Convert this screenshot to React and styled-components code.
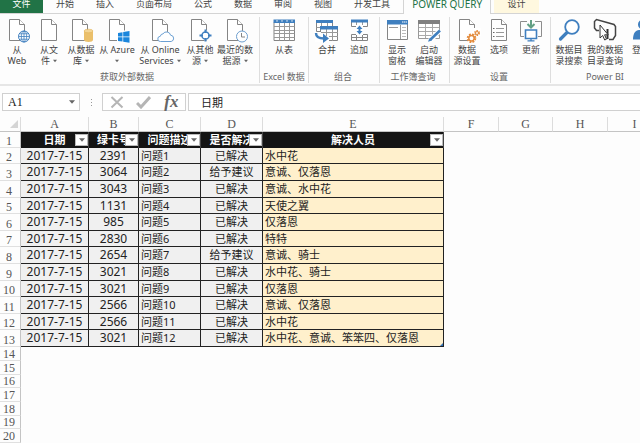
import styled, { createGlobalStyle } from 'styled-components'

const TABS = ['开始', '插入', '页面布局', '公式', '数据', '审阅', '视图', '开发工具']

const PEOPLE = [
	['2391', '已解决', '水中花'],
	['3064', '给予建议', '意诚、仅落恩'],
	['3043', '已解决', '意诚、水中花'],
	['1131', '已解决', '天使之翼'],
	['985', '已解决', '仅落恩'],
	['2830', '已解决', '特特'],
	['2654', '给予建议', '意诚、骑士'],
	['3021', '已解决', '水中花、骑士'],
	['3021', '已解决', '仅落恩'],
	['2566', '已解决', '意诚、仅落恩'],
	['2566', '已解决', '水中花'],
	['3021', '已解决', '水中花、意诚、笨笨四、仅落恩'],
]

const HEADERS = ['日期', '绿卡号', '问题描述', '是否解决', '解决人员']
const LETTERS = ['A', 'B', 'C', 'D', 'E', 'F', 'G', 'H', 'I']
const COL_WIDTHS = [21, 68, 50, 62, 62, 181, 55, 54, 55, 54]
const EMPTY_ROWS = [14, 15, 16, 17, 18, 19, 20]

const BLUE = '#3f7fbf'

/* ---------- icons ---------- */

const Icon = ({ children }) => (
	<svg width='24' height='24' viewBox='0 0 24 24' fill='none' overflow='visible' aria-hidden='true'>
		{children}
	</svg>
)

const Doc = ({ x = 4 }) => (
	<g transform={`translate(${x} 0)`} stroke='#858585' fill='#fff'>
		<path d='M.5 1.5h10l5 5v16H.5z' />
		<path d='M10.5 1.5v5h5' />
	</g>
)

const WebIcon = () => (
	<Icon>
		<Doc />
		<circle cx='19' cy='18.5' r='5.5' fill='#fff' stroke={BLUE} />
		<path d='M13.5 18.5h11M19 13v11M14.5 15.8h9M14.5 21.2h9' stroke={BLUE} strokeWidth='.8' />
		<ellipse cx='19' cy='18.5' rx='2.7' ry='5.5' stroke={BLUE} strokeWidth='.8' />
	</Icon>
)

const FileIcon = () => (
	<Icon>
		<Doc />
	</Icon>
)

const DatabaseIcon = () => (
	<Icon>
		<Doc x={3} />
		<path d='M15 13v9c0 1.200 2 2 4.500 2s4.500-.8 4.500-2v-9z' fill='#ebc06b' />
		<ellipse cx='19.500' cy='13' rx='4.500' ry='1.800' fill='#f3d595' stroke='#e3b459' strokeWidth='.6' />
	</Icon>
)

const AzureIcon = () => (
	<Icon>
		<Doc />
		<path d='M12 12.500h13v12H12z' fill='#fff' />
		<path d='M13 15l4.500-.8v4.300H13zM18.200 14l6.300-1v5.500h-6.300zM13 19.300h4.500v4.300l-4.500-.7zM18.200 19.300h6.300v5.400l-6.300-.9z' fill='#1b86dc' />
	</Icon>
)

const CloudIcon = () => (
	<Icon>
		<Doc />
		<path
			d='M12.500 23.500a2.600 2.600 0 0 1-.2-5.200 3 3 0 0 1 2.700-2.500 4.200 4.200 0 0 1 7.600 1.400 3.200 3.200 0 0 1 .6 6.300z'
			fill='#fff'
			stroke='#6ba0d3'
		/>
	</Icon>
)

const OtherIcon = () => (
	<Icon>
		<Doc x={3} />
		<path d='M17.500 11l2.500 4 4 2.500-4 2.500-2.500 4-2.500-4-4-2.500 4-2.500z' fill='#fff' />
		<circle cx='17.500' cy='17.500' r='3.600' fill='#fff' stroke={BLUE} strokeWidth='1.500' />
		<path d='M17.500 11.500v3.500M17.500 20v3.500M11.500 17.500H15M20 17.500h3.500' stroke={BLUE} strokeWidth='2' />
	</Icon>
)

const RecentIcon = () => (
	<Icon>
		<Doc />
		<circle cx='19' cy='18.500' r='5.500' fill='#fff' stroke='#6f9fcf' />
		<path d='M18.500 15v4h3.500' stroke='#858585' />
	</Icon>
)

const TableIcon = () => (
	<Icon>
		<path d='M2 4.500h20.500v18H2z' fill='#fff' stroke='#858585' />
		<path d='M2 8.500h20.500M2 12.500h20.500M2 15.500h20.500M2 19.500h20.500M7.500 5v17.500M12.500 5v17.500M17.500 5v17.500' stroke='#999' />
		<path d='M1.500 1.500H23v3.500H1.500z' fill={BLUE} />
		<path d='M4 2.500h2l-1 1.500zM9 2.500h2l-1 1.500zM14 2.500h2l-1 1.500zM19 2.500h2l-1 1.500z' fill='#fff' />
	</Icon>
)

const MergeIcon = () => (
	<Icon>
		<path d='M1.500 4.500h16v9h-16z' fill='#fff' stroke='#858585' />
		<path d='M1.500 9.500h16M6.500 5v8M12.500 5v8' stroke='#999' />
		<path d='M1 2h17v3H1z' fill={BLUE} />
		<path d='M5.500 10.500h17v12h-17z' fill='#fff' stroke='#858585' />
		<path d='M6 14.500h17M6 18.500h17M11.500 11v12M17.500 11v12' stroke='#999' />
		<path d='M5 8h18v3.500H5z' fill={BLUE} />
		<path d='M0 14h6v10H0zM6 18h8v6H6z' fill='#fff' />
		<path d='M1 15c0 4 3 5.500 8 5.500' stroke={BLUE} strokeWidth='2.400' />
		<path d='M8 15.500l6 5-6 4.500z' fill={BLUE} />
	</Icon>
)

const AppendIcon = () => (
	<Icon>
		<path d='M4.500 3.500h16v5h-16z' fill='#fff' stroke='#858585' />
		<path d='M9.500 4v4M15.500 4v4' stroke='#999' />
		<path d='M4 1.500h17v3H4z' fill={BLUE} />
		<path d='M4.500 16.500h16v6h-16zM4.500 19.500h16M9.500 17v5.500M15.500 17v5.500' stroke='#858585' />
		<path d='M9 7h7v10H9z' fill='#fff' />
		<path d='M12.500 7.500L15.500 11h-2v2h2l-3 3.500-3-3.500h2v-2h-2z' fill={BLUE} />
	</Icon>
)

const PaneIcon = () => (
	<Icon>
		<path d='M2.500 3.500h20v18h-20z' fill='#fff' stroke='#858585' />
		<path d='M2 2h21v4.500H2z' fill={BLUE} />
		<path d='M17 4h1.500M19 4h1.500M21 4h1' stroke='#fff' />
		<path d='M4 9.500h9M15.500 7v14' stroke='#999' />
		<path d='M17 9.500h4M17 12.500h4M17 15.500h4M17 18.500h4' stroke='#bbb' />
	</Icon>
)

const EditorIcon = () => (
	<Icon>
		<path d='M1.500 4.500h21v16h-21z' fill='#fff' stroke='#999' />
		<path d='M2 9.500h20M2 13.500h20M2 17.500h20M8.500 5v15M15.500 5v15' stroke='#aaa' />
		<path d='M1 2h22v4H1z' fill='#808080' />
		<path d='M23 12.500L13 22.500' stroke='#fff' strokeWidth='5' />
		<path d='M23 12.500L13.500 21.500' stroke={BLUE} strokeWidth='2.600' />
		<path d='M12.500 20l2.500 2.500-4 1.200z' fill={BLUE} />
	</Icon>
)

const SourceIcon = () => (
	<Icon>
		<Doc />
		<path d='M13 15h6v-5h7v8h-4v7h-9z' fill='#fff' />
		<circle cx='16.500' cy='20.300' r='3.800' stroke='#e38b3c' strokeWidth='2' strokeDasharray='1.800 1.200' />
		<circle cx='16.500' cy='20.300' r='2.700' stroke='#e38b3c' strokeWidth='1.500' />
		<circle cx='22' cy='15' r='2.200' stroke='#e38b3c' strokeWidth='1.500' strokeDasharray='1.300 .9' />
		<circle cx='22' cy='15' r='1.500' stroke='#e38b3c' />
	</Icon>
)

const OptionsIcon = () => (
	<Icon>
		<Doc />
		<path d='M9 10.500h8M9 14.500h8M9 18.500h8' stroke='#999' />
		<path d='M6 10.500h1.500M6 14.500h1.500M6 18.500h1.500' stroke='#666' />
	</Icon>
)

const UpdateIcon = () => (
	<Icon>
		<path d='M8 3.500H1.500v15H5M16 3.500h6.500v15H19' stroke='#8d8d8d' />
		<path d='M12 2v7M8.500 6l3.500 3.500L15.500 6' stroke='#62a084' strokeWidth='2' />
		<path d='M6.500 12h11v8.500h-11z' fill='#fff' stroke={BLUE} strokeWidth='1.600' />
		<path d='M12 20v2.500M8.500 22.800h7' stroke={BLUE} strokeWidth='1.300' />
	</Icon>
)

const SearchIcon = () => (
	<Icon>
		<path d='M10 14.500l-6.500 6.500' stroke={BLUE} strokeWidth='3.200' strokeLinecap='round' />
		<circle cx='15' cy='9' r='6.800' fill='#fff' stroke={BLUE} strokeWidth='1.800' />
	</Icon>
)

const CatalogIcon = () => (
	<Icon>
		<path d='M6 12.500H3.500L1.500 10V3.500l2-2L21 6.500l1.500 2v9L20 21.500h-4' stroke='#444' strokeWidth='1.500' />
		<path d='M14.500 11v10' stroke='#333' strokeWidth='2' />
		<path d='M7 7v13l2.700-2.500 2 4.500 1.800-.8-1.900-4.400h3.600z' fill='#fff' stroke='#333' />
	</Icon>
)

const PersonIcon = () => (
	<Icon>
		<circle cx='14' cy='6.500' r='5' fill={BLUE} />
		<path d='M4 21.500c0-6 2.500-9.500 6-9.500h8c4 0 6 4 6 9.500z' fill={BLUE} />
	</Icon>
)

const Arrow = ({ size = 4 }) => (
	<ArrowSvg width={size} height={size} viewBox='0 0 4 4' aria-hidden='true'>
		<path d='M0 .8h4L2 3.200z' fill='#666' />
	</ArrowSvg>
)

/* ---------- ribbon ---------- */

const GROUPS = [
	{
		label: '获取外部数据',
		end: 5,
		items: [
			{ w: 34, icon: WebIcon, lines: ['从', 'Web'] },
			{ w: 30, icon: FileIcon, lines: ['从文', '件'], menu: true },
			{ w: 34, icon: DatabaseIcon, lines: ['从数据', '库'], menu: true },
			{ w: 38, icon: AzureIcon, lines: ['从 Azure', ''], menu: true },
			{ w: 48, icon: CloudIcon, lines: ['从 Online', 'Services'], menu: true },
			{ w: 32, icon: OtherIcon, lines: ['从其他', '源'], menu: true },
			{ w: 38, icon: RecentIcon, lines: ['最近的数', '据源'], menu: true },
		],
	},
	{ label: 'Excel 数据', items: [{ w: 48, icon: TableIcon, lines: ['从表'] }] },
	{
		label: '组合',
		start: 2,
		end: 4,
		items: [
			{ w: 32, icon: MergeIcon, lines: ['合并'] },
			{ w: 32, icon: AppendIcon, lines: ['追加'] },
		],
	},
	{
		label: '工作簿查询',
		start: 1,
		end: 4,
		items: [
			{ w: 32, icon: PaneIcon, lines: ['显示', '窗格'] },
			{ w: 32, icon: EditorIcon, lines: ['启动', '编辑器'] },
		],
	},
	{
		label: '设置',
		start: 1,
		end: 3,
		items: [
			{ w: 32, icon: SourceIcon, lines: ['数据', '源设置'] },
			{ w: 32, icon: OptionsIcon, lines: ['选项'] },
			{ w: 32, icon: UpdateIcon, lines: ['更新'] },
		],
	},
	{
		label: 'Power BI',
		items: [
			{ w: 36, icon: SearchIcon, lines: ['数据目', '录搜索'] },
			{ w: 36, icon: CatalogIcon, lines: ['我的数据', '目录查询'] },
			{ w: 36, icon: PersonIcon, lines: ['登录'] },
		],
	},
]

const RibbonGroup = ({ group }) => (
	<Group $start={group.start} $end={group.end}>
		<GroupItems>
			{group.items.map(({ w, icon: ItemIcon, lines, menu }) => (
				<RibbonButton key={lines.join('')} type='button' $w={w}>
					<ItemIcon />
					<ButtonLabel>
						{lines.map((line, i) => (
							<ButtonLine key={i}>
								{line}
								{menu && i === lines.length - 1 && <Arrow />}
							</ButtonLine>
						))}
					</ButtonLabel>
				</RibbonButton>
			))}
		</GroupItems>
		<GroupLabel>{group.label}</GroupLabel>
	</Group>
)

const App = () => (
	<Page>
		<GlobalStyle />
		<TabBar>
			<FileTab type='button'>文件</FileTab>
			{TABS.map((tab) => (
				<Tab key={tab} type='button'>
					{tab}
				</Tab>
			))}
			<ActiveTab type='button'>POWER QUERY</ActiveTab>
			<DesignTab type='button'>设计</DesignTab>
		</TabBar>
		<Ribbon>
			{GROUPS.map((group) => (
				<RibbonGroup key={group.label} group={group} />
			))}
		</Ribbon>

		<FormulaBar>
			<NameBox>
				<NameInput aria-label='名称框' defaultValue='A1' />
				<NameButton type='button' aria-label='名称列表'>
					<Arrow size={6} />
				</NameButton>
			</NameBox>
			<Dots>
				<i />
				<i />
				<i />
			</Dots>
			<FormulaTools>
				<ToolButton type='button' aria-label='取消'>
					<svg width='14' height='14' viewBox='0 0 14 14' stroke='#b5b5b5' strokeWidth='2'>
						<path d='M1.500 2l11 10.500M12.500 2l-11 10.500' />
					</svg>
				</ToolButton>
				<ToolButton type='button' aria-label='输入'>
					<svg width='15' height='14' viewBox='0 0 15 14' fill='none' stroke='#b5b5b5' strokeWidth='3'>
						<path d='M1 8l4 4 9-10' />
					</svg>
				</ToolButton>
				<FxButton type='button'>fx</FxButton>
			</FormulaTools>
			<FormulaInput aria-label='编辑栏' defaultValue='日期' />
		</FormulaBar>

		<Sheet>
			<colgroup>
				{COL_WIDTHS.map((w, i) => (
					<Col key={i} $w={w} />
				))}
			</colgroup>
			<thead>
				<tr>
					<Corner>
						<svg width='8' height='8' viewBox='0 0 8 8' aria-hidden='true'>
							<path d='M8 0v8H0z' fill='#d5d5d5' />
						</svg>
					</Corner>
					{LETTERS.map((letter) => (
						<ColumnHead key={letter} scope='col'>
							{letter}
						</ColumnHead>
					))}
				</tr>
			</thead>
			<tbody>
				<DataRow $h={16}>
					<RowHead scope='row'>1</RowHead>
					{HEADERS.map((text) => (
						<FieldHead key={text}>
							<FieldText>{text}</FieldText>
							<FilterButton type='button' aria-label={`筛选${text}`}>
								<Arrow size={6} />
							</FilterButton>
						</FieldHead>
					))}
					<td colSpan={4} />
				</DataRow>
				{PEOPLE.map(([card, state, people], i) => (
					<DataRow key={i} $h={i % 5 === 0 || i % 5 === 3 ? 16 : 17}>
						<RowHead scope='row'>{i + 2}</RowHead>
						<NumberCell>2017-7-15</NumberCell>
						<NumberCell>{card}</NumberCell>
						<Cell>问题{i + 1}</Cell>
						<Cell $align='center'>{state}</Cell>
						<PeopleCell>
							{people}
							{i === PEOPLE.length - 1 && <ResizeHandle />}
						</PeopleCell>
						<td colSpan={4} />
					</DataRow>
				))}
				{EMPTY_ROWS.map((n, i) => (
					<DataRow key={n} $h={i % 3 === 2 ? 13 : 14}>
						<RowHead scope='row'>{n}</RowHead>
						<td colSpan={9} />
					</DataRow>
				))}
			</tbody>
		</Sheet>
	</Page>
)

const GlobalStyle = createGlobalStyle`
	* {
		box-sizing: border-box;
	}

	body {
		margin: 0;
		background: #fdfdfd;
	}

	button,
	input {
		font: inherit;
		color: inherit;
		margin: 0;
		padding: 0;
		border: none;
		border-radius: 0;
		background: none;
	}
`

const Page = styled.div`
	height: 100vh;
	overflow: hidden;
	font-family: 'Noto Sans', 'Noto Sans CJK SC', sans-serif;
	font-size: 9px;
	color: #444;
`

const TabBar = styled.div`
	display: flex;
	height: 20px;
	margin-top: -6px;
	border-bottom: 1px solid #d4d4d4;
`

const Tab = styled.button`
	flex: none;
	padding: 0 11px;
	line-height: 19px;
	white-space: nowrap;
`

const FileTab = styled(Tab)`
	width: 43px;
	margin-right: 2px;
	background: #217346;
	color: #fff;
`

const ActiveTab = styled(Tab)`
	width: 88px;
	height: 20px;
	padding: 0;
	margin: 0 3px 0 2px;
	border: solid #d4d4d4;
	border-width: 0 1px;
	background: #fdfdfd;
	font-size: 10px;
	color: #217346;
`

const DesignTab = styled(Tab)`
	width: 45px;
	background: #fff8df;
`

const Ribbon = styled.div`
	display: flex;
	padding: 3px 0 1px;
	border-bottom: 2px solid #e6e6e6;
`

const Group = styled.section`
	flex: none;
	display: flex;
	flex-direction: column;
	justify-content: space-between;
	height: 66px;
	padding: 0 ${(p) => p.$end || 0}px 0 ${(p) => p.$start || 0}px;

	& + & {
		border-left: 1px solid #dedede;
	}
`

const GroupItems = styled.div`
	display: flex;
	align-items: flex-start;
`

const RibbonButton = styled.button`
	display: flex;
	flex-direction: column;
	align-items: center;
	width: ${(p) => p.$w}px;
	padding-top: 1px;
`

const ButtonLabel = styled.span`
	margin-top: 2px;
	line-height: 11px;
	white-space: nowrap;
`

const ButtonLine = styled.span`
	display: flex;
	align-items: center;
	justify-content: center;
	gap: 3px;
	height: 11px;
`

const ArrowSvg = styled.svg`
	flex: none;
	display: block;
`

const GroupLabel = styled.span`
	height: 12px;
	line-height: 12px;
	text-align: center;
	white-space: nowrap;
	color: #666;
`

const FormulaBar = styled.div`
	display: flex;
	height: 18px;
	margin: 7px 0 6px;
	padding-left: 2px;
`

const NameBox = styled.div`
	display: flex;
	width: 78px;
	border: 1px solid #d0d0d0;
	background: #fff;
`

const NameInput = styled.input`
	flex: 1;
	min-width: 0;
	padding-left: 5px;
	font-family: 'Liberation Serif', serif;
	font-size: 12px;
	color: #222;
`

const NameButton = styled.button`
	display: grid;
	place-items: center;
	width: 15px;
`

const Dots = styled.div`
	display: flex;
	flex-direction: column;
	align-items: center;
	justify-content: center;
	gap: 2px;
	width: 22px;

	i {
		width: 1px;
		height: 1px;
		background: #999;
	}
`

const FormulaTools = styled.div`
	display: flex;
	align-items: center;
	justify-content: space-around;
	width: 84px;
	margin-right: 2px;
	border: 1px solid #d0d0d0;
	background: #fff;
`

const ToolButton = styled.button`
	display: grid;
	place-items: center;
	width: 20px;
`

const FxButton = styled.button`
	width: 20px;
	font: italic bold 17px/16px 'Liberation Serif', serif;
	color: #666;
`

const FormulaInput = styled.input`
	flex: 1;
	min-width: 0;
	padding-left: 12px;
	border: 1px solid #d0d0d0;
	border-right: none;
	background: #fff;
	font-size: 11px;
	color: #222;
`

const Sheet = styled.table`
	width: 100%;
	table-layout: fixed;
	border-collapse: separate;
	border-spacing: 0;

	th,
	td {
		padding: 0;
	}
`

const Col = styled.col`
	width: ${(p) => p.$w}px;
`

const ColumnHead = styled.th`
	height: 15px;
	border-right: 1px solid #dcdcdc;
	border-bottom: 1px solid #c4c4c4;
	font: 12px/12px 'Liberation Serif', serif;
	color: #555;
`

const Corner = styled.td`
	border-right: 1px solid #dcdcdc;
	border-bottom: 1px solid #c4c4c4;
	vertical-align: middle;

	svg {
		display: block;
		margin: 0 2px 0 auto;
	}
`

const DataRow = styled.tr`
	height: ${(p) => p.$h}px;
`

const RowHead = styled.th`
	border-right: 1px solid #c4c4c4;
	border-bottom: 1px solid #e0e0e0;
	font: 12px/12px 'Liberation Serif', serif;
	vertical-align: bottom;
	color: #555;

	&& {
		padding-right: 2px;
	}
`

const Cell = styled.td`
	border-right: 1px solid #222;
	border-bottom: 1px solid #222;
	background: #f0f0f0;
	font-size: 11px;
	line-height: 14px;
	text-align: ${(p) => p.$align || 'left'};
	text-indent: ${(p) => (p.$align ? 0 : 2)}px;
	white-space: nowrap;
	color: #222;
`

const NumberCell = styled(Cell)`
	font-size: 12px;
	text-align: center;
	text-indent: 0;
`

const PeopleCell = styled(Cell)`
	position: relative;
	background: #fff0cc;
`

const FieldHead = styled.th`
	position: relative;
	border-right: 1px solid #444;
	background: #141414;
	color: #fff;
	font-size: 11px;
	line-height: 14px;
`

const FieldText = styled.div`
	display: flex;
	justify-content: center;
	overflow: hidden;
	white-space: nowrap;
`

const FilterButton = styled.button`
	position: absolute;
	right: 0;
	top: 2px;
	display: grid;
	place-items: center;
	width: 13px;
	height: 12px;
	border: 1px solid #bbb;
	background: #fff;
`

const ResizeHandle = styled.span`
	position: absolute;
	right: 0;
	bottom: 0;
	width: 3px;
	height: 3px;
	background: #2f6fb5;
	clip-path: polygon(100% 0, 100% 100%, 0 100%);
`

export default App
